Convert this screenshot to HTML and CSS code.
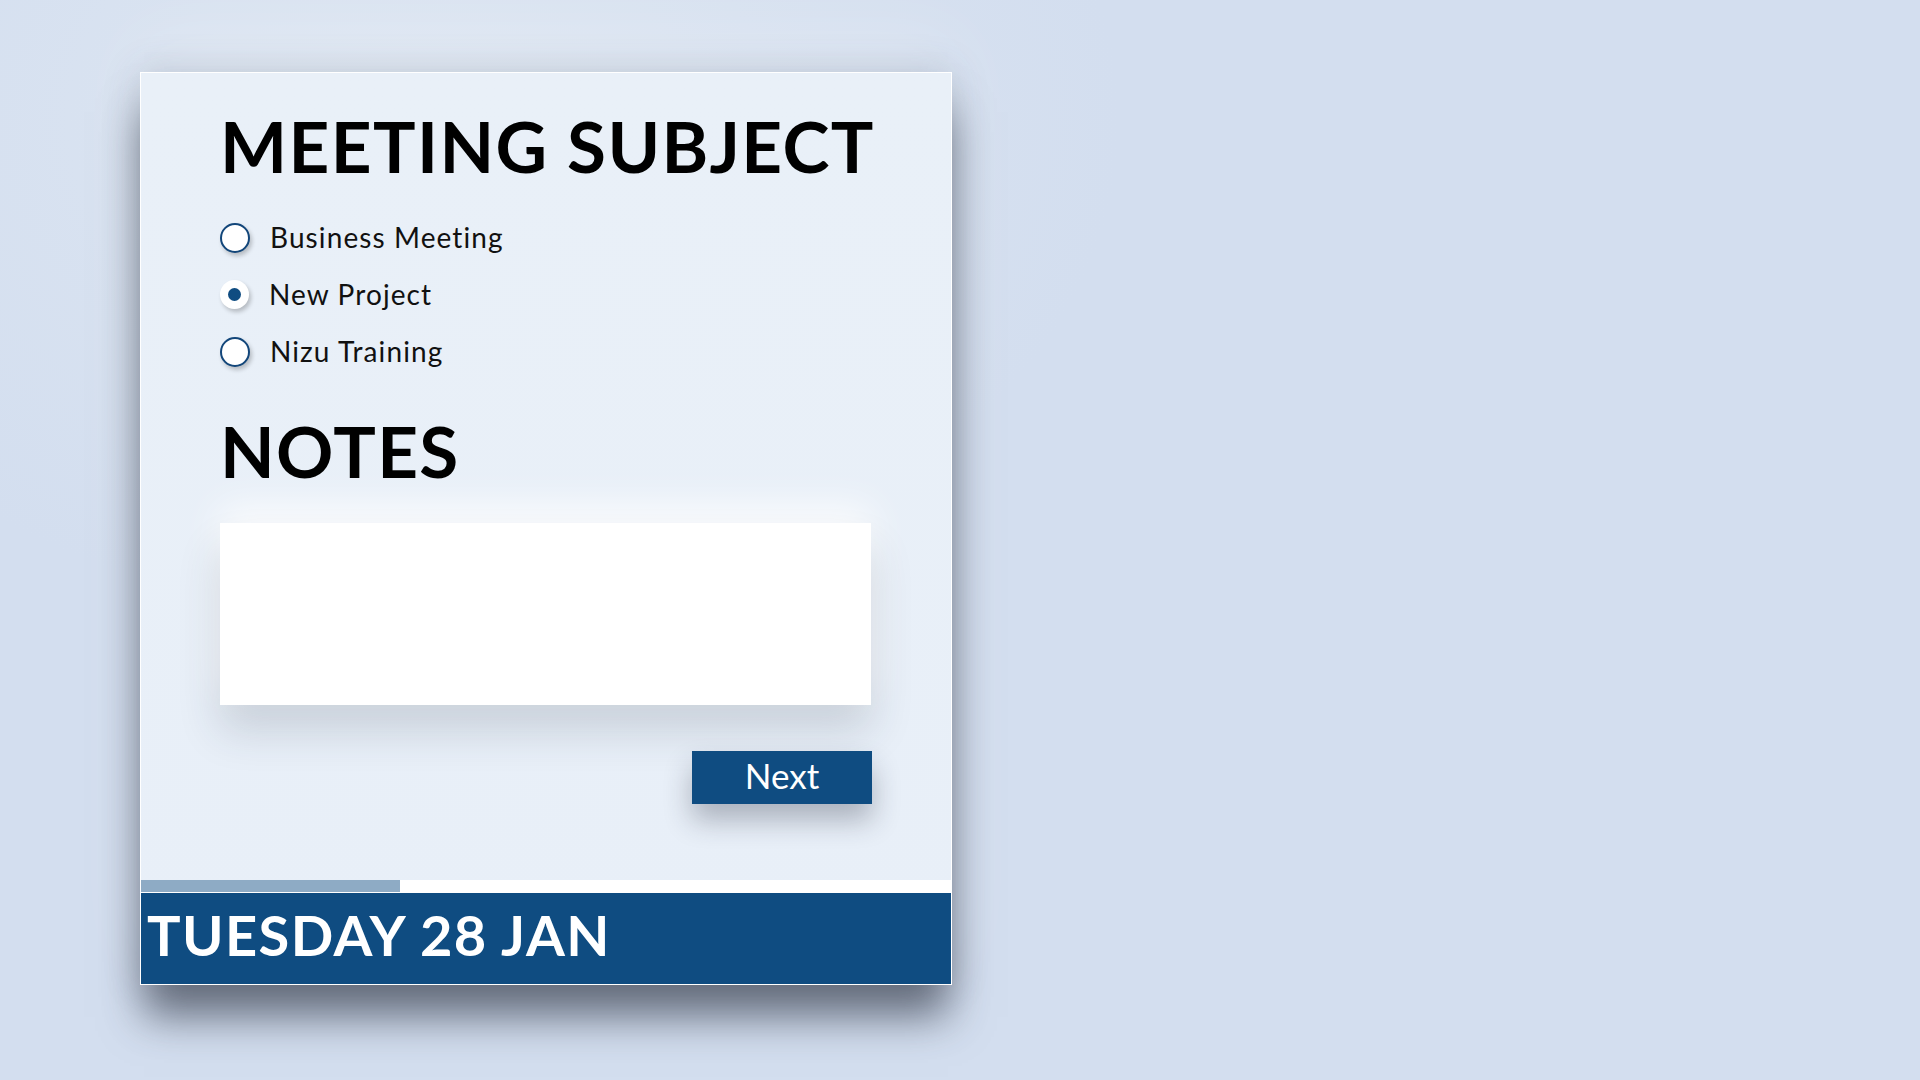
FILE: index.html
```html
<!DOCTYPE html>
<html lang="en">
<head>
<meta charset="utf-8">
<title>Meeting</title>
<link rel="stylesheet" href="styles.css">
</head>
<body>
<div class="page">
  <div class="card">
    <div class="content">
      <h1 class="title">MEETING SUBJECT</h1>
      <div class="options">
        <label class="option"><span class="radio"></span><span class="label">Business Meeting</span></label>
        <label class="option"><span class="radio checked"></span><span class="label">New Project</span></label>
        <label class="option"><span class="radio"></span><span class="label">Nizu Training</span></label>
      </div>
      <h2 class="title notes-title">NOTES</h2>
      <div class="notes"></div>
      <div class="actions"><button class="next">Next</button></div>
    </div>
    <div class="progress"><div class="fill" style="width:259px"></div></div>
    <div class="date">TUESDAY 28 JAN</div>
  </div>
</div>
</body>
</html>
```
FILE: styles.css
```css
* { box-sizing: border-box; }
html, body { margin: 0; padding: 0; }
body {
  width: 1920px;
  height: 1080px;
  overflow: hidden;
  background: radial-gradient(ellipse 700px 500px at 420px 120px, #dde6f2 0%, #d3deef 100%);
  font-family: Lato, "Open Sans", sans-serif;
}
.page {
  padding: 72px 0 0 140px;
}
.card {
  width: 812px;
  height: 913px;
  border: 1px solid #ffffff;
  background: linear-gradient(180deg, #e9f0f8 0%, #e8eff8 100%);
  display: flex;
  flex-direction: column;
  box-shadow: 0 36px 40px -4px rgba(40, 46, 62, 0.62), 0 0 36px rgba(60, 75, 100, 0.2), 0 -30px 70px rgba(255, 255, 255, 0.25);
}
.content {
  flex: 1;
  padding: 37px 0 0 79px;
  width: 731px;
}
.title {
  margin: 0;
  font-size: 71px;
  line-height: 71px;
  font-weight: 700;
  color: #000;
  letter-spacing: 1.4px;
  white-space: nowrap;
}
.options {
  margin-top: 28px;
  display: flex;
  flex-direction: column;
}
.option {
  height: 57px;
  display: flex;
  align-items: center;
}
.radio {
  width: 30px;
  height: 30px;
  border-radius: 50%;
  border: 2.5px solid #12467a;
  background: #fff;
  box-shadow: 2px 3px 4px rgba(0, 0, 0, 0.22);
  flex: none;
  display: flex;
  align-items: center;
  justify-content: center;
}
.radio.checked {
  border: none;
  width: 29px;
  height: 29px;
}
.radio.checked::after {
  content: "";
  width: 13px;
  height: 13px;
  border-radius: 50%;
  background: #0f4c81;
}
.label {
  margin-left: 20px;
  font-size: 28px;
  line-height: 57px;
  color: #111;
  letter-spacing: 1.1px;
}
.notes-title {
  margin-top: 35px;
}
.notes {
  margin-top: 37px;
  width: 651px;
  height: 182px;
  background: #fff;
  box-shadow: 0 26px 40px rgba(40, 50, 70, 0.16), 0 -16px 36px rgba(255, 255, 255, 0.85);
}
.actions {
  margin-top: 46px;
  width: 652px;
  display: flex;
  justify-content: flex-end;
}
.next {
  width: 180px;
  height: 53px;
  border: none;
  background: #0f4c81;
  color: #fff;
  font-family: Lato, "Open Sans", sans-serif;
  font-size: 35px;
  line-height: 35px;
  font-weight: 400;
  padding: 0 0 4px 0;
  box-shadow: 0 16px 28px rgba(40, 48, 66, 0.32);
}
.progress {
  height: 13px;
  background: #fff;
  flex: none;
}
.fill {
  height: 12px;
  background: #8eabc5;
}
.date {
  flex: none;
  height: 91px;
  background: #0f4c81;
  color: #fff;
  font-size: 56px;
  line-height: 56px;
  font-weight: 700;
  letter-spacing: 1.4px;
  padding: 14px 0 0 6px;
  white-space: nowrap;
}
```
